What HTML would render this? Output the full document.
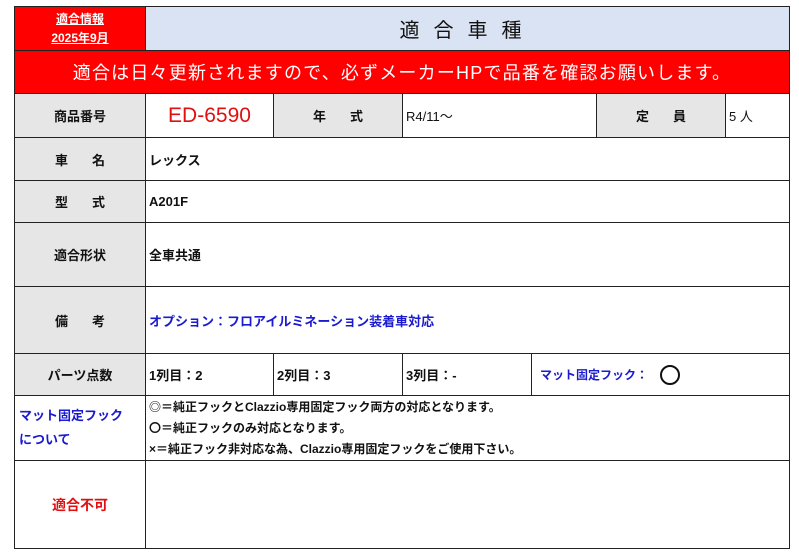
<!DOCTYPE html><html><head><meta charset="utf-8"><style>
body{margin:0;width:799px;height:556px;background:#fff;font-family:"Liberation Sans","Noto Sans CJK JP",sans-serif;font-weight:bold;overflow:hidden}
.c{position:absolute;box-sizing:border-box;border:1px solid #222;display:flex;align-items:center;font-size:13px;color:#111}
.g{background:#e7e6e6;justify-content:center}
.l{padding-left:3px}
.b{color:#1a1ad0}
</style></head><body>
<div class="c" style="left:14px;top:6px;width:132px;height:45px;background:#f00;flex-direction:column;justify-content:center;color:#fff;font-size:12px;line-height:19px"><u>適合情報</u><u>2025年9月</u></div>
<div class="c" style="left:145px;top:6px;width:645px;height:45px;background:#dae3f3;justify-content:center;font-size:20px;letter-spacing:14px;font-weight:normal">適合車種</div>
<div class="c" style="left:14px;top:50px;width:776px;height:44px;background:#f00;justify-content:center;color:#fff;font-size:18px;font-weight:normal;letter-spacing:1.2px">適合は日々更新されますので、必ずメーカーHPで品番を確認お願いします。</div>
<div class="c g" style="left:14px;top:93px;width:132px;height:45px">商品番号</div>
<div class="c" style="left:145px;top:93px;width:129px;height:45px;justify-content:center;color:#e01010;font-size:21px;font-weight:normal">ED-6590</div>
<div class="c g" style="left:273px;top:93px;width:130px;height:45px;letter-spacing:24px;padding-left:24px">年式</div>
<div class="c l" style="left:402px;top:93px;width:195px;height:45px;font-weight:normal">R4/11～</div>
<div class="c g" style="left:596px;top:93px;width:130px;height:45px;letter-spacing:24px;padding-left:24px">定員</div>
<div class="c l" style="left:725px;top:93px;width:65px;height:45px;font-weight:normal">5 人</div>
<div class="c g" style="left:14px;top:137px;width:132px;height:44px;letter-spacing:24px;padding-left:24px">車名</div>
<div class="c l" style="left:145px;top:137px;width:645px;height:44px">レックス</div>
<div class="c g" style="left:14px;top:180px;width:132px;height:43px;letter-spacing:24px;padding-left:24px">型式</div>
<div class="c l" style="left:145px;top:180px;width:645px;height:43px">A201F</div>
<div class="c g" style="left:14px;top:222px;width:132px;height:65px">適合形状</div>
<div class="c l" style="left:145px;top:222px;width:645px;height:65px">全車共通</div>
<div class="c g" style="left:14px;top:286px;width:132px;height:68px;letter-spacing:24px;padding-left:24px">備考</div>
<div class="c l b" style="left:145px;top:286px;width:645px;height:68px">オプション：フロアイルミネーション装着車対応</div>
<div class="c g" style="left:14px;top:353px;width:132px;height:43px">パーツ点数</div>
<div class="c l" style="left:145px;top:353px;width:129px;height:43px">1列目：2</div>
<div class="c l" style="left:273px;top:353px;width:130px;height:43px">2列目：3</div>
<div class="c l" style="left:402px;top:353px;width:130px;height:43px">3列目：-</div>
<div class="c l b" style="left:531px;top:353px;width:259px;height:43px;padding-left:8px;font-size:12px">マット固定フック：<span style="display:inline-block;width:16px;height:16px;border:2px solid #111;border-radius:50%;margin-left:12px"></span></div>
<div class="c b" style="left:14px;top:395px;width:132px;height:66px;flex-direction:column;align-items:flex-start;justify-content:center;padding-left:4px;line-height:24px">マット固定フック<span>について</span></div>
<div class="c" style="left:145px;top:395px;width:645px;height:66px;flex-direction:column;align-items:flex-start;justify-content:center;padding-left:3px;font-size:12px;line-height:21px"><div>◎＝純正フックとClazzio専用固定フック両方の対応となります。</div><div>〇＝純正フックのみ対応となります。</div><div>×＝純正フック非対応な為、Clazzio専用固定フックをご使用下さい。</div></div>
<div class="c" style="left:14px;top:460px;width:132px;height:89px;justify-content:center;color:#e01010;font-size:14px">適合不可</div>
<div class="c" style="left:145px;top:460px;width:645px;height:89px"></div>
</body></html>
